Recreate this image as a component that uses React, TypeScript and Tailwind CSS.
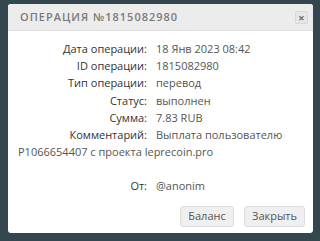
import React from "react";

const rows: [string, string][] = [
  ["Дата операции:", "18 Янв 2023 08:42"],
  ["ID операции:", "1815082980"],
  ["Тип операции:", "перевод"],
  ["Статус:", "выполнен"],
  ["Сумма:", "7.83 RUB"],
];

export default function App() {
  return (
    <div
      className="w-[320px] h-[241px] bg-[#34464e] pt-[4px] pl-[8px]"
      style={{ fontFamily: "'Open Sans', 'DejaVu Sans', sans-serif" }}
    >
      <div className="w-[305px] h-[229px] bg-white rounded-[3px] flex flex-col overflow-hidden">
        <div className="h-[27px] bg-[#ececec] flex items-center justify-between pl-[12px] pr-[5px] border-b border-[#e2e2e2]">
          <span className="text-[11px] tracking-[1px] text-[#7a7a7a] font-semibold">
            ОПЕРАЦИЯ №1815082980
          </span>
          <span className="w-[13px] h-[13px] border border-[#d6d6d6] bg-[#e6e6e6] rounded-[2px] flex items-center justify-center text-[11px] leading-none font-bold text-[#666]">
            ×
          </span>
        </div>
        <div className="pt-[9px] px-[10px] text-[11px] leading-[17.2px] text-[#555]">
          {rows.map(([l, v]) => (
            <div key={l}>
              <span className="inline-block w-[129px] text-right text-[#333] mr-[9px]">{l}</span>
              <span>{v}</span>
            </div>
          ))}
          <div>
            <span className="inline-block w-[129px] text-right text-[#333] mr-[9px]">Комментарий:</span>
            <span>Выплата пользователю P1066654407 с проекта leprecoin.pro</span>
          </div>
          <div className="mt-[17px]">
            <span className="inline-block w-[129px] text-right text-[#333] mr-[9px]">От:</span>
            <span>@anonim</span>
          </div>
        </div>
        <div className="mt-auto mb-[6px] flex justify-end gap-[10px] pr-[8px]">
          <button className="w-[54px] h-[21px] bg-[#efefef] border border-[#dcdcdc] rounded-[3px] text-[11px] text-[#555]">
            Баланс
          </button>
          <button className="w-[61px] h-[21px] bg-[#efefef] border border-[#dcdcdc] rounded-[3px] text-[11px] text-[#555]">
            Закрыть
          </button>
        </div>
      </div>
    </div>
  );
}
